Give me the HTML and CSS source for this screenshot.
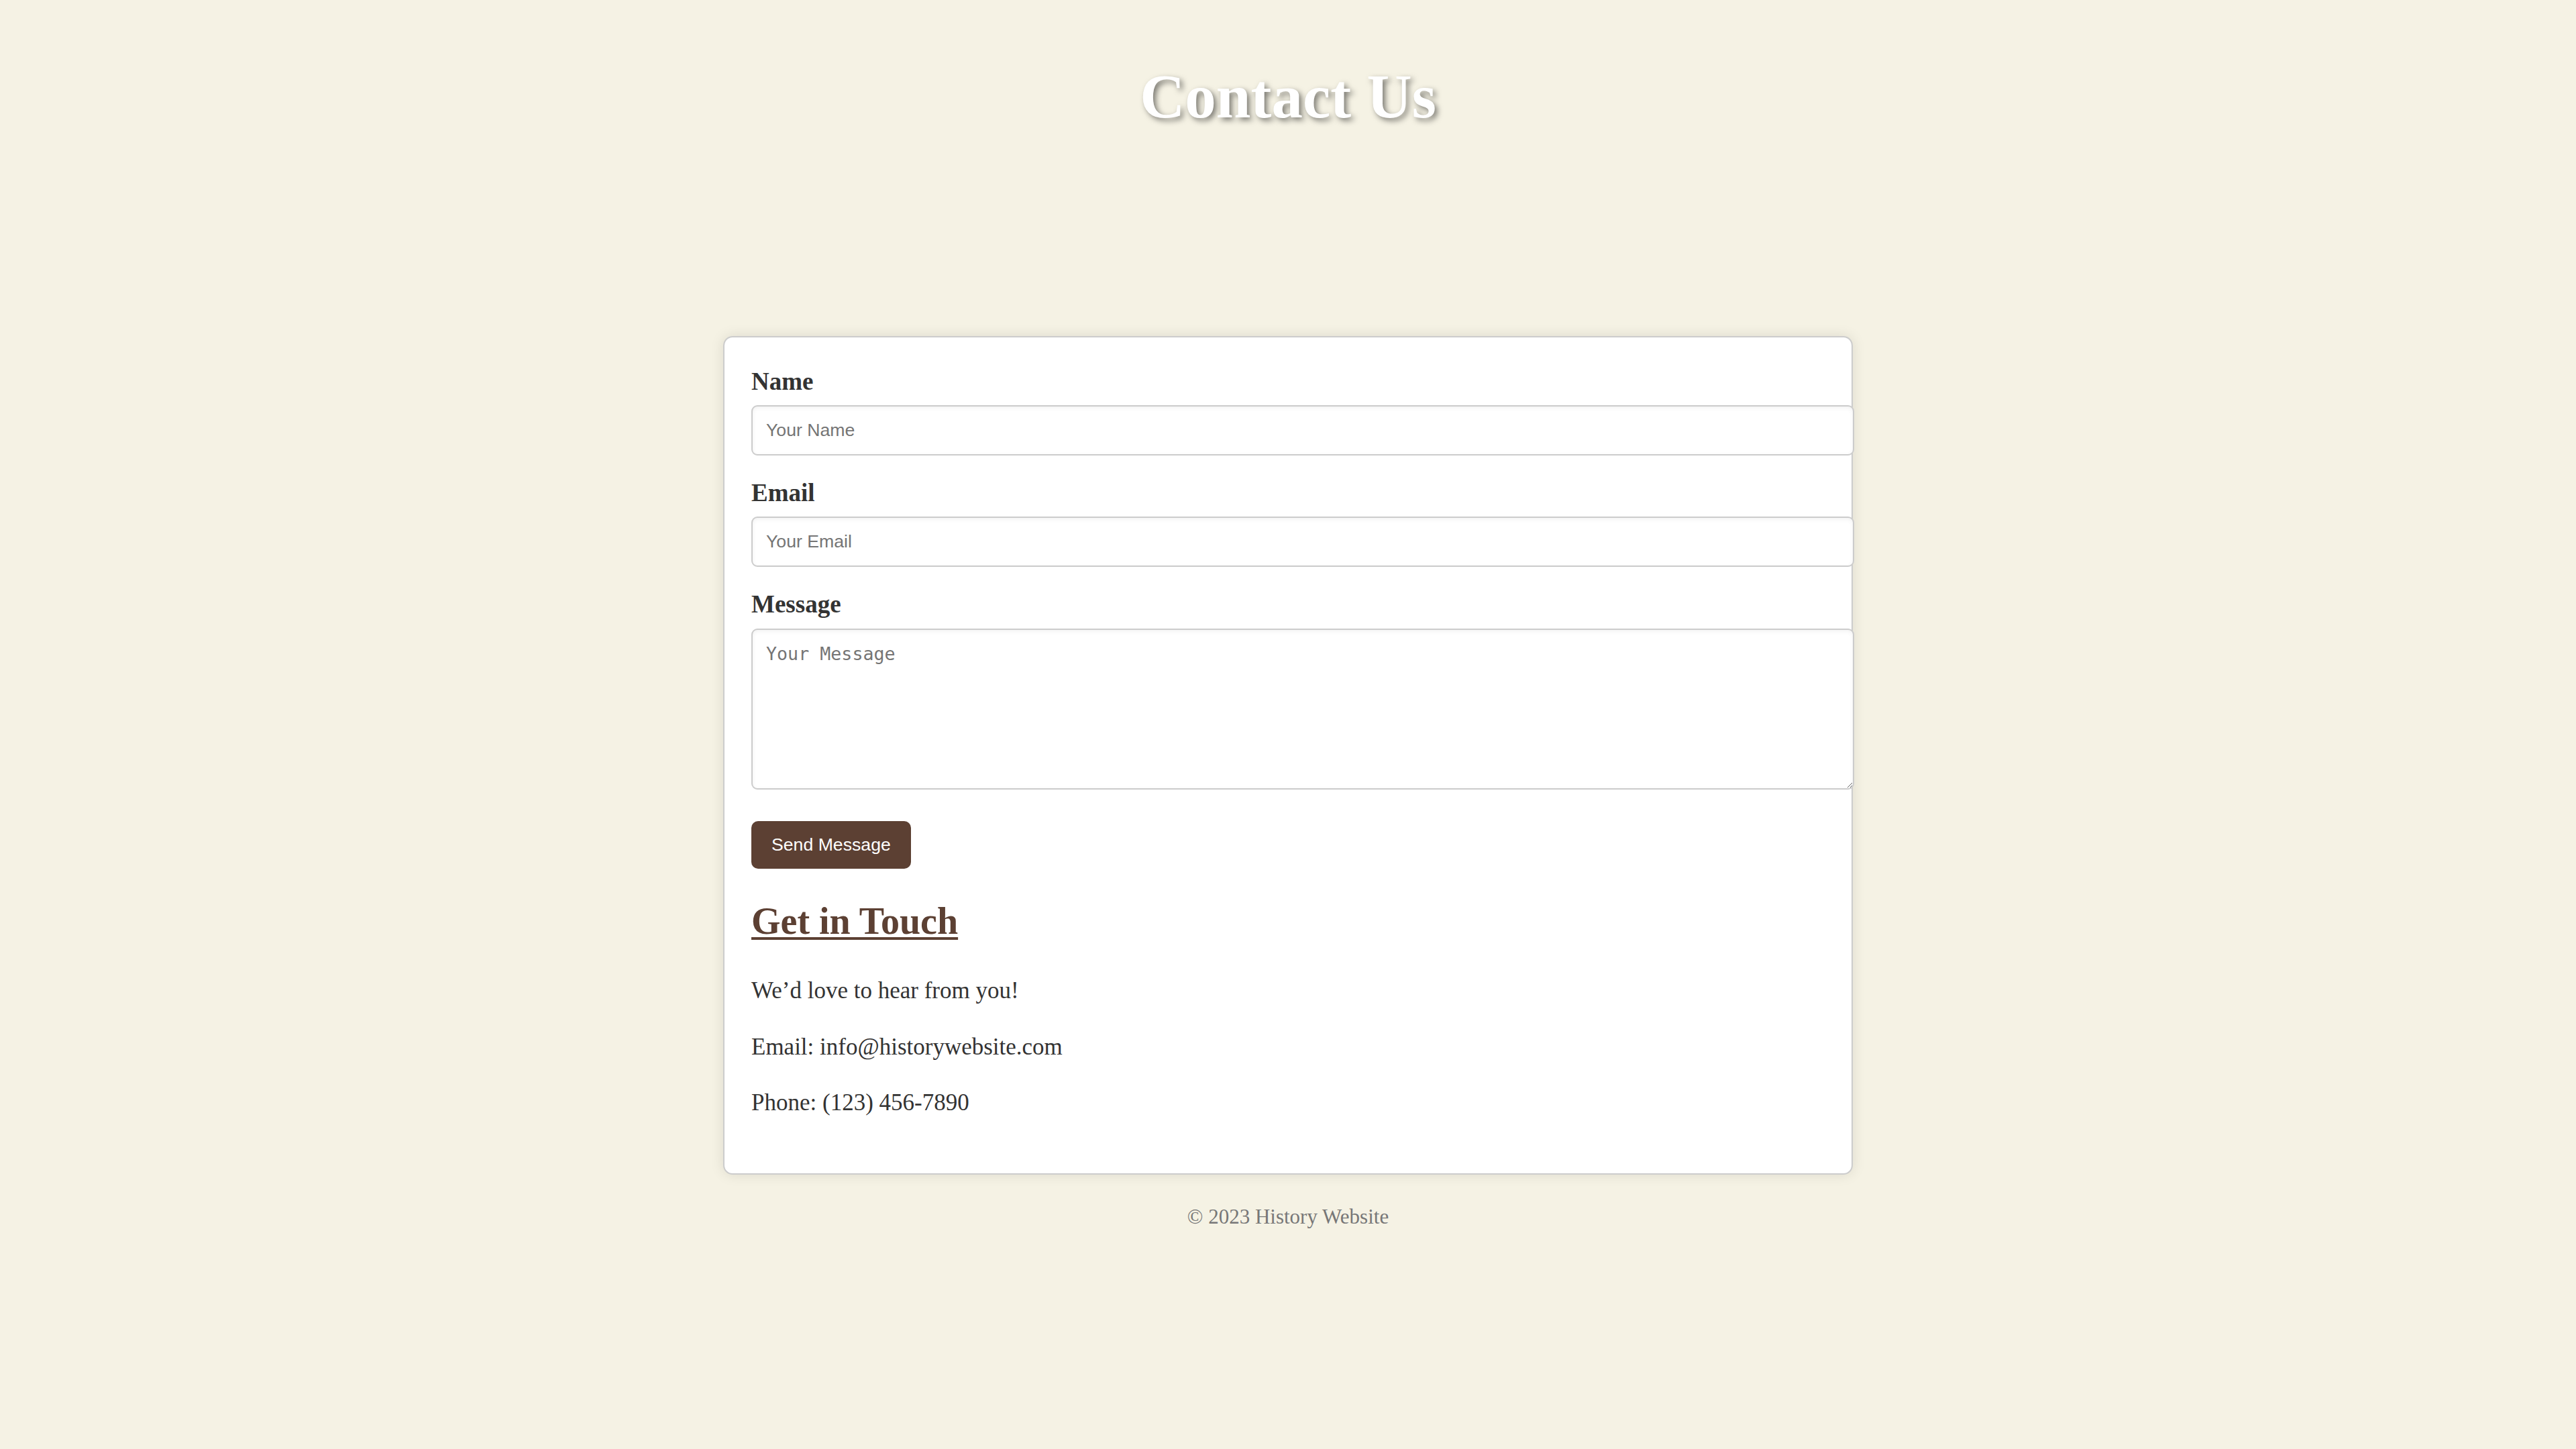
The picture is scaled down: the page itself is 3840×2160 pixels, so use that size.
FILE: index.html
```html
<!DOCTYPE html>
<html lang="en">
<head>
<meta charset="utf-8">
<title>Contact Us - History Website</title>
<link rel="stylesheet" href="styles.css">
</head>
<body>
<header class="site-header">
  <h1 class="page-title">Contact Us</h1>
</header>
<main class="container">
  <section class="contact-card">
    <form class="contact-form">
      <div class="form-group">
        <label class="form-label" for="name">Name</label>
        <input class="form-input" type="text" id="name" placeholder="Your Name">
      </div>
      <div class="form-group">
        <label class="form-label" for="email">Email</label>
        <input class="form-input" type="email" id="email" placeholder="Your Email">
      </div>
      <div class="form-group form-group-message">
        <label class="form-label" for="message">Message</label>
        <textarea class="form-textarea" id="message" placeholder="Your Message"></textarea>
      </div>
      <button class="send-button" type="button">Send Message</button>
    </form>
    <div class="contact-info">
      <h2 class="info-title">Get in Touch</h2>
      <p class="info-text">We’d love to hear from you!</p>
      <p class="info-text">Email: info@historywebsite.com</p>
      <p class="info-text">Phone: (123) 456-7890</p>
    </div>
  </section>
</main>
<footer class="site-footer">
  <p class="footer-text">© 2023 History Website</p>
</footer>
</body>
</html>
```
FILE: styles.css
```css
html, body {
  margin: 0;
  padding: 0;
}

body {
  background: #f5f2e4;
  color: #333333;
  font-family: "Liberation Serif", "Times New Roman", serif;
  font-size: 35px;
  line-height: 51.2px;
}

.site-header {
  padding: 80px 0 0;
  text-align: center;
}

.page-title {
  margin: 0;
  font-size: 93px;
  line-height: 128px;
  font-weight: bold;
  color: #ffffff;
  text-shadow: 4px 4px 8px rgba(0, 0, 0, 0.5);
}

.container {
  padding-top: 293px;
  display: flex;
  justify-content: center;
}

.contact-card {
  width: 1600px;
  padding: 40px;
  background: #ffffff;
  border: 2px solid #cccccc;
  border-radius: 14px;
  box-shadow: 0 0 20px rgba(0, 0, 0, 0.1);
}

.form-group {
  margin-bottom: 30px;
}

.form-group-message {
  margin-bottom: 47px;
}

.form-label {
  display: block;
  font-weight: bold;
  font-size: 37px;
  line-height: 51.2px;
  margin-bottom: 10px;
  color: #333333;
}

.form-input,
.form-textarea {
  display: block;
  width: 100%;
  box-sizing: content-box;
  margin: 0;
  padding: 20px;
  border: 2px solid #cccccc;
  border-radius: 9px;
  background: #ffffff;
  box-shadow: inset 0 2px 6px rgba(0, 0, 0, 0.06);
  color: #333333;
}

.form-input {
  font-family: "Liberation Sans", Arial, sans-serif;
  font-size: 26.67px;
  line-height: normal;
}

.form-textarea {
  height: 196px;
  font-family: "DejaVu Sans Mono", "Liberation Mono", monospace;
  font-size: 26.67px;
  line-height: normal;
  resize: both;
}

.form-input::placeholder,
.form-textarea::placeholder {
  color: #757575;
}

.send-button {
  display: block;
  margin: 0;
  padding: 20px 30px;
  border: none;
  border-radius: 10px;
  background: #5c4033;
  color: #ffffff;
  font-family: "Liberation Sans", Arial, sans-serif;
  font-size: 26.67px;
  line-height: normal;
}

.info-title {
  margin: 40px 0;
  font-size: 56px;
  line-height: 76.8px;
  font-weight: bold;
  color: #5c4033;
  text-decoration: underline;
  text-decoration-thickness: 4px;
  text-underline-offset: 5px;
}

.info-text {
  margin: 32px 0;
  color: #333333;
}

.info-text:last-child {
  margin-bottom: 40px;
}

.site-footer {
  padding-top: 40px;
  text-align: center;
}

.footer-text {
  margin: 0;
  font-size: 31px;
  line-height: 46px;
  color: #777777;
}
```
